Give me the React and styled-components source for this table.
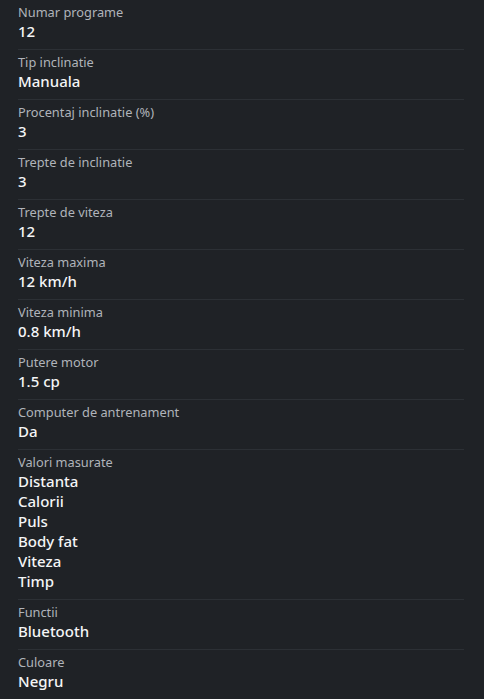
import React from "react";
import styled, { createGlobalStyle } from "styled-components";

const GlobalStyle = createGlobalStyle`
  html, body {
    margin: 0;
    padding: 0;
    background: #1f2226;
  }
  body {
    font-family: "Noto Sans", "Open Sans", sans-serif;
    -webkit-font-smoothing: antialiased;
  }
`;

const specs = [
  { label: "Numar programe", values: ["12"] },
  { label: "Tip inclinatie", values: ["Manuala"] },
  { label: "Procentaj inclinatie (%)", values: ["3"] },
  { label: "Trepte de inclinatie", values: ["3"] },
  { label: "Trepte de viteza", values: ["12"] },
  { label: "Viteza maxima", values: ["12 km/h"] },
  { label: "Viteza minima", values: ["0.8 km/h"] },
  { label: "Putere motor", values: ["1.5 cp"] },
  { label: "Computer de antrenament", values: ["Da"] },
  {
    label: "Valori masurate",
    values: ["Distanta", "Calorii", "Puls", "Body fat", "Viteza", "Timp"],
  },
  { label: "Functii", values: ["Bluetooth"] },
  { label: "Culoare", values: ["Negru"] },
];

const List = styled.dl`
  margin: 0;
  padding: 0 20px 0 18px;
  background: #1f2226;
`;

const Row = styled.div`
  display: flex;
  flex-direction: column;
  padding: 3px 0 8px;
  border-bottom: 1px solid #2c3035;

  &:last-child {
    border-bottom: none;
  }
`;

const Label = styled.dt`
  font-size: 12.8px;
  line-height: 18px;
  color: #b0b4ba;
  font-weight: 400;
`;

const Value = styled.dd`
  margin: 0;
  font-size: 15px;
  line-height: 20px;
  color: #f4f5f6;
  font-weight: 500;
`;

export default function App() {
  return (
    <>
      <GlobalStyle />
      <List>
        {specs.map((spec) => (
          <Row key={spec.label}>
            <Label>{spec.label}</Label>
            {spec.values.map((v) => (
              <Value key={v}>{v}</Value>
            ))}
          </Row>
        ))}
      </List>
    </>
  );
}
